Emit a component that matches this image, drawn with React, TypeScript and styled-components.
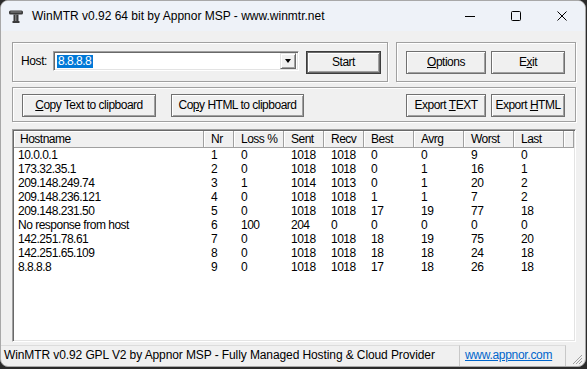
import React from "react";
import styled, { createGlobalStyle } from "styled-components";

const Global = createGlobalStyle`
  html, body { margin: 0; padding: 0; background: #2b2b2b; width: 587px; height: 369px; overflow: hidden; }
  #root { width: 587px; height: 369px; }
  * { box-sizing: border-box; }
`;

const UI = `"Liberation Sans", Arial, sans-serif`;
const SEG = `"Liberation Sans", Arial, sans-serif`;

const Window = styled.div`
  width: 586px;
  height: 367px;
  background: #f0f0f0;
  border: 1px solid #a8a8a8;
  border-radius: 8px;
  overflow: hidden;
  display: flex;
  flex-direction: column;
`;

const TitleBar = styled.div`
  height: 30px;
  flex: 0 0 30px;
  background: #eef2f8;
  display: flex;
  align-items: center;
  font-family: ${SEG};
  font-size: 12px;
  color: #000;
`;

const AppIcon = styled.svg`
  margin-left: 8px;
  flex: 0 0 auto;
`;

const Title = styled.span`
  margin-left: 9px;
  white-space: nowrap;
`;

const Controls = styled.div`
  margin-left: auto;
  display: flex;
  height: 100%;
`;

const CtlBtn = styled.div`
  width: 46px;
  height: 100%;
  display: flex;
  align-items: center;
  justify-content: center;
`;

const Body = styled.div`
  flex: 1;
  display: flex;
  flex-direction: column;
  padding: 11px 9px 0 11px;
`;

const Row = styled.div<{ $mt?: number }>`
  display: flex;
  gap: 8px;
  margin-top: ${(p) => p.$mt ?? 0}px;
`;

const Group = styled.div<{ $w?: number; $h: number; $pl: number; $pr?: number; $pt: number; $gap?: number }>`
  ${(p) => (p.$w ? `width: ${p.$w}px;` : "flex: 1;")}
  height: ${(p) => p.$h}px;
  border: 1px solid #a0a0a0;
  box-shadow: inset 1px 1px 0 #fff, 1px 1px 0 #fff;
  display: flex;
  align-items: flex-start;
  gap: ${(p) => p.$gap ?? 0}px;
  padding: ${(p) => p.$pt}px ${(p) => p.$pr ?? 0}px 0 ${(p) => p.$pl}px;
`;

const Label = styled.span`
  font-family: ${UI};
  font-size: 12px;
  letter-spacing: -0.4px;
  width: 32px;
  height: 20px;
  line-height: 20px;
`;

const Combo = styled.div`
  width: 246px;
  height: 20px;
  background: #fff;
  border-style: solid;
  border-width: 1px;
  border-color: #a0a0a0 #fff #fff #a0a0a0;
  box-shadow: inset 1px 1px 0 #696969, inset -1px -1px 0 #e3e3e3;
  display: flex;
  align-items: center;
  padding: 2px 2px 2px 3px;
  font-family: ${UI};
  font-size: 12px;
  letter-spacing: -0.5px;
`;

const Selected = styled.span`
  background: #0078d7;
  color: #fff;
  padding: 0 1.5px 0 1px;
  line-height: 13px;
`;

const DropBtn = styled.div`
  margin-left: auto;
  width: 16px;
  height: 16px;
  background: #f0f0f0;
  border-style: solid;
  border-width: 1px;
  border-color: #e3e3e3 #696969 #696969 #e3e3e3;
  box-shadow: inset 1px 1px 0 #fff, inset -1px -1px 0 #a0a0a0;
  display: flex;
  align-items: center;
  justify-content: center;
`;

const Arrow = styled.div`
  width: 0;
  height: 0;
  border-left: 3.5px solid transparent;
  border-right: 3.5px solid transparent;
  border-top: 4px solid #000;
`;

const Button = styled.div<{ $w: number; $ml?: number; $def?: boolean }>`
  width: ${(p) => p.$w}px;
  height: 23px;
  flex: 0 0 auto;
  margin-left: ${(p) => p.$ml ?? 0}px;
  background: #f0f0f0;
  border: 1px solid ${(p) => (p.$def ? "#3c3c3c" : "#707070")};
  box-shadow: ${(p) =>
    p.$def
      ? "inset 0 0 0 1px #6a6a6a, inset 2px 2px 0 #fff, inset -2px -2px 0 #a0a0a0"
      : "inset 1px 1px 0 #fff, inset -1px -1px 0 #a0a0a0"};
  display: flex;
  align-items: center;
  justify-content: center;
  font-family: ${UI};
  font-size: 12px;
  letter-spacing: -0.5px;
  color: #000;
  white-space: pre;
  padding-bottom: 1px;
`;

const U = styled.span`
  text-decoration: underline;
  text-underline-offset: 1px;
`;

const Spacer = styled.div`
  flex: 1;
`;

const List = styled.div`
  margin-top: 7px;
  height: 213px;
  background: #fff;
  border-style: solid;
  border-width: 1px;
  border-color: #a0a0a0 #fff #fff #a0a0a0;
  box-shadow: inset 1px 1px 0 #696969, inset -1px -1px 0 #e3e3e3;
  padding: 1px;
  font-family: ${UI};
  font-size: 12px;
  letter-spacing: -0.5px;
  color: #000;
`;

const COLS = "190px 30px 50px 40px 40px 50px 50px 50px 50px 1fr";

const HeaderRow = styled.div`
  display: grid;
  grid-template-columns: ${COLS};
  height: 17px;
`;

const HeadCell = styled.div<{ $first?: boolean }>`
  background: #f0f0f0;
  border-right: 1px solid #a0a0a0;
  border-bottom: 1px solid #a0a0a0;
  box-shadow: inset 1px 1px 0 #fff;
  line-height: 17px;
  padding-left: ${(p) => (p.$first ? 6 : 7)}px;
  white-space: nowrap;
  overflow: hidden;
`;

const DataRow = styled.div`
  display: grid;
  grid-template-columns: ${COLS};
  height: 14px;
  line-height: 14px;
`;

const Cell = styled.div<{ $first?: boolean }>`
  padding-left: ${(p) => (p.$first ? 4 : 7)}px;
  white-space: nowrap;
  overflow: hidden;
`;

const StatusBar = styled.div`
  margin: 3px -9px 0 -11px;
  height: 21px;
  display: flex;
  font-family: ${SEG};
  font-size: 12px;
  letter-spacing: -0.1px;
  color: #000;
`;

const Panel = styled.div<{ $w: number; $pl: number }>`
  flex: 0 0 ${(p) => p.$w}px;
  border-top: 1px solid #dcdcdc;
  border-right: 1px solid #c8c8c8;
  padding-left: ${(p) => p.$pl}px;
  line-height: 19px;
  white-space: nowrap;
  overflow: hidden;
`;

const Link = styled.span`
  color: #0066cc;
  text-decoration: underline;
  letter-spacing: -0.3px;
`;

const Grip = styled.div`
  flex: 1;
  display: flex;
  align-items: flex-end;
  justify-content: flex-end;
  padding: 0 2px 1px 0;
`;

const headers = ["Hostname", "Nr", "Loss %", "Sent", "Recv", "Best", "Avrg", "Worst", "Last", ""];

const rows: string[][] = [
  ["10.0.0.1", "1", "0", "1018", "1018", "0", "0", "9", "0"],
  ["173.32.35.1", "2", "0", "1018", "1018", "0", "1", "16", "1"],
  ["209.148.249.74", "3", "1", "1014", "1013", "0", "1", "20", "2"],
  ["209.148.236.121", "4", "0", "1018", "1018", "1", "1", "7", "2"],
  ["209.148.231.50", "5", "0", "1018", "1018", "17", "19", "77", "18"],
  ["No response from host", "6", "100", "204", "0", "0", "0", "0", "0"],
  ["142.251.78.61", "7", "0", "1018", "1018", "18", "19", "75", "20"],
  ["142.251.65.109", "8", "0", "1018", "1018", "18", "18", "24", "18"],
  ["8.8.8.8", "9", "0", "1018", "1018", "17", "18", "26", "18"],
];

export default function App() {
  return (
    <>
      <Global />
      <Window>
        <TitleBar>
          <AppIcon width="14" height="13" viewBox="0 0 14 13">
            <rect x="0" y="0.5" width="14" height="4" rx="1.5" fill="#3a3a3a" />
            <rect x="1.5" y="1.5" width="11" height="1" fill="#8a8a8a" />
            <rect x="4.5" y="4.5" width="5" height="7.5" fill="#3a3a3a" />
            <rect x="6" y="5" width="1.5" height="6.5" fill="#7a7a7a" />
            <rect x="3.5" y="11" width="7" height="2" fill="#3a3a3a" />
          </AppIcon>
          <Title>WinMTR v0.92 64 bit by Appnor MSP - www.winmtr.net</Title>
          <Controls>
            <CtlBtn>
              <svg width="10" height="10" viewBox="0 0 10 10">
                <line x1="0" y1="5.5" x2="10" y2="5.5" stroke="#000" strokeWidth="1" />
              </svg>
            </CtlBtn>
            <CtlBtn>
              <svg width="10" height="10" viewBox="0 0 10 10">
                <rect x="0.5" y="0.5" width="9" height="9" rx="1" fill="none" stroke="#000" strokeWidth="1" />
              </svg>
            </CtlBtn>
            <CtlBtn>
              <svg width="10" height="10" viewBox="0 0 10 10">
                <path d="M0.5 0.5 L9.5 9.5 M9.5 0.5 L0.5 9.5" stroke="#000" strokeWidth="1" />
              </svg>
            </CtlBtn>
          </Controls>
        </TitleBar>
        <Body>
          <Row>
            <Group $w={376} $h={40} $pl={8} $pt={8}>
              <Label>Host:</Label>
              <Combo>
                <Selected>8.8.8.8</Selected>
                <DropBtn>
                  <Arrow />
                </DropBtn>
              </Combo>
              <Button $w={75} $ml={7} $def>
                <span>Start</span>
              </Button>
            </Group>
            <Group $w={180} $h={40} $pl={9} $pt={8} $gap={5}>
              <Button $w={80}>
                <span><U>O</U>ptions</span>
              </Button>
              <Button $w={74}>
                <span>E<U>x</U>it</span>
              </Button>
            </Group>
          </Row>
          <Row $mt={5}>
            <Group $h={35} $pl={9} $pr={10} $pt={6}>
              <Button $w={134}>
                <span><U>C</U>opy Text to clipboard</span>
              </Button>
              <Button $w={133} $ml={15}>
                <span>Co<U>p</U>y HTML to clipboard</span>
              </Button>
              <Spacer />
              <Button $w={80}>
                <span>Export <U>T</U>EXT</span>
              </Button>
              <Button $w={74} $ml={5}>
                <span>Export <U>H</U>TML</span>
              </Button>
            </Group>
          </Row>
          <List>
            <HeaderRow>
              {headers.map((h, i) => (
                <HeadCell key={i} $first={i === 0}>
                  {h}
                </HeadCell>
              ))}
            </HeaderRow>
            {rows.map((r, ri) => (
              <DataRow key={ri}>
                {r.map((c, ci) => (
                  <Cell key={ci} $first={ci === 0}>
                    {c}
                  </Cell>
                ))}
              </DataRow>
            ))}
          </List>
          <StatusBar>
            <Panel $w={459} $pl={3}>
              WinMTR v0.92 GPL V2 by Appnor MSP - Fully Managed Hosting &amp; Cloud Provider
            </Panel>
            <Panel $w={106} $pl={5}>
              <Link>www.appnor.com</Link>
            </Panel>
            <Grip>
              <svg width="12" height="12" viewBox="0 0 12 12">
                <path d="M11 2 L2 11 M11 5 L5 11 M11 8 L8 11" stroke="#a0a0a0" strokeWidth="1" />
              </svg>
            </Grip>
          </StatusBar>
        </Body>
      </Window>
    </>
  );
}
